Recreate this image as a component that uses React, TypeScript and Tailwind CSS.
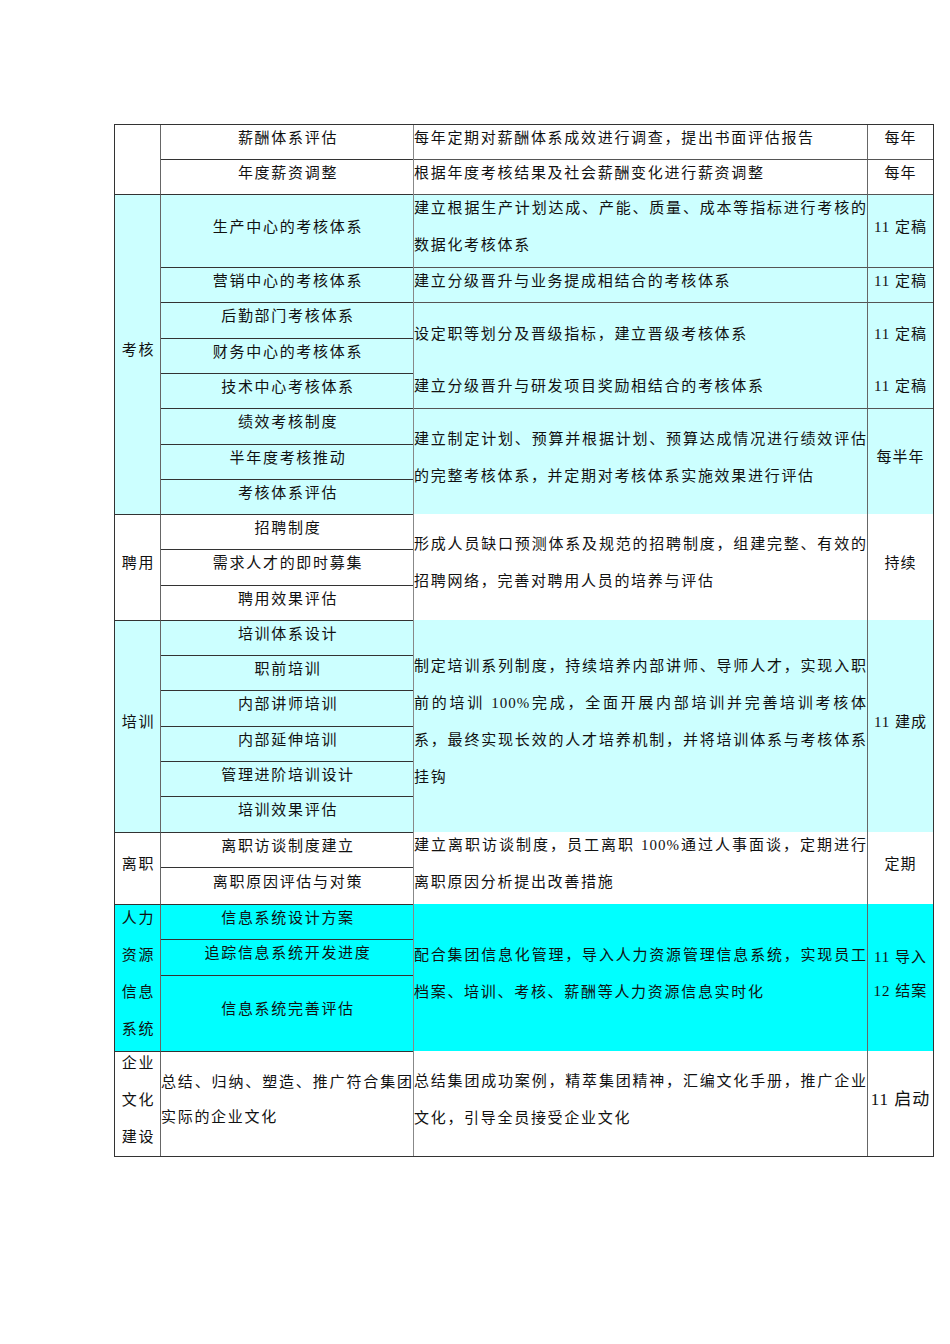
import React from "react";

interface Item {
  t: string[];
  h: string;
  left?: boolean;
}

interface Group {
  items: Item[];
  desc: { text: string; full?: boolean }[];
  when: string[];
  whenClass?: string;
  line: boolean;
}

interface Section {
  label: string[];
  bg: string;
  groups: Group[];
}

const LIGHT = "bg-[#ccffff]";
const CYAN = "bg-[#00ffff]";

const sections: Section[] = [
  {
    label: [],
    bg: "bg-white",
    groups: [
      {
        items: [{ t: ["薪酬体系评估"], h: "h-[34px]" }],
        desc: [{ text: "每年定期对薪酬体系成效进行调查，提出书面评估报告" }],
        when: ["每年"],
        line: true,
      },
      {
        items: [{ t: ["年度薪资调整"], h: "h-[35px]" }],
        desc: [{ text: "根据年度考核结果及社会薪酬变化进行薪资调整" }],
        when: ["每年"],
        line: true,
      },
    ],
  },
  {
    label: ["考核"],
    bg: LIGHT,
    groups: [
      {
        items: [{ t: ["生产中心的考核体系"], h: "h-[73px]" }],
        desc: [
          { text: "建立根据生产计划达成、产能、质量、成本等指标进行考核的", full: true },
          { text: "数据化考核体系" },
        ],
        when: ["11 定稿"],
        line: true,
      },
      {
        items: [{ t: ["营销中心的考核体系"], h: "h-[35px]" }],
        desc: [{ text: "建立分级晋升与业务提成相结合的考核体系" }],
        when: ["11 定稿"],
        line: true,
      },
      {
        items: [
          { t: ["后勤部门考核体系"], h: "h-[36px]" },
          { t: ["财务中心的考核体系"], h: "h-[35px]" },
        ],
        desc: [{ text: "设定职等划分及晋级指标，建立晋级考核体系" }],
        when: ["11 定稿"],
        line: true,
      },
      {
        items: [{ t: ["技术中心考核体系"], h: "h-[35px]" }],
        desc: [{ text: "建立分级晋升与研发项目奖励相结合的考核体系" }],
        when: ["11 定稿"],
        line: false,
      },
      {
        items: [
          { t: ["绩效考核制度"], h: "h-[36px]" },
          { t: ["半年度考核推动"], h: "h-[35px]" },
          { t: ["考核体系评估"], h: "h-[35px]" },
        ],
        desc: [
          { text: "建立制定计划、预算并根据计划、预算达成情况进行绩效评估", full: true },
          { text: "的完整考核体系，并定期对考核体系实施效果进行评估" },
        ],
        when: ["每半年"],
        line: true,
      },
    ],
  },
  {
    label: ["聘用"],
    bg: "bg-white",
    groups: [
      {
        items: [
          { t: ["招聘制度"], h: "h-[35px]" },
          { t: ["需求人才的即时募集"], h: "h-[36px]" },
          { t: ["聘用效果评估"], h: "h-[35px]" },
        ],
        desc: [
          { text: "形成人员缺口预测体系及规范的招聘制度，组建完整、有效的", full: true },
          { text: "招聘网络，完善对聘用人员的培养与评估" },
        ],
        when: ["持续"],
        line: false,
      },
    ],
  },
  {
    label: ["培训"],
    bg: LIGHT,
    groups: [
      {
        items: [
          { t: ["培训体系设计"], h: "h-[35px]" },
          { t: ["职前培训"], h: "h-[35px]" },
          { t: ["内部讲师培训"], h: "h-[36px]" },
          { t: ["内部延伸培训"], h: "h-[35px]" },
          { t: ["管理进阶培训设计"], h: "h-[35px]" },
          { t: ["培训效果评估"], h: "h-[36px]" },
        ],
        desc: [
          { text: "制定培训系列制度，持续培养内部讲师、导师人才，实现入职", full: true },
          { text: "前的培训 100%完成，全面开展内部培训并完善培训考核体", full: true },
          { text: "系，最终实现长效的人才培养机制，并将培训体系与考核体系", full: true },
          { text: "挂钩" },
        ],
        when: ["11 建成"],
        line: false,
      },
    ],
  },
  {
    label: ["离职"],
    bg: "bg-white",
    groups: [
      {
        items: [
          { t: ["离职访谈制度建立"], h: "h-[35px]" },
          { t: ["离职原因评估与对策"], h: "h-[37px]" },
        ],
        desc: [
          { text: "建立离职访谈制度，员工离职 100%通过人事面谈，定期进行", full: true },
          { text: "离职原因分析提出改善措施" },
        ],
        when: ["定期"],
        line: false,
      },
    ],
  },
  {
    label: ["人力", "资源", "信息", "系统"],
    bg: CYAN,
    groups: [
      {
        items: [
          { t: ["信息系统设计方案"], h: "h-[35px]" },
          { t: ["追踪信息系统开发进度"], h: "h-[36px]" },
          { t: ["信息系统完善评估"], h: "h-[76px]" },
        ],
        desc: [
          { text: "配合集团信息化管理，导入人力资源管理信息系统，实现员工", full: true },
          { text: "档案、培训、考核、薪酬等人力资源信息实时化" },
        ],
        when: ["11 导入", "12 结案"],
        whenClass: "leading-[34px]",
        line: false,
      },
    ],
  },
  {
    label: ["企业", "文化", "建设"],
    bg: "bg-white",
    groups: [
      {
        items: [
          {
            t: ["总结、归纳、塑造、推广符合集团", "实际的企业文化"],
            h: "h-[105px]",
            left: true,
          },
        ],
        desc: [
          { text: "总结集团成功案例，精萃集团精神，汇编文化手册，推广企业", full: true },
          { text: "文化，引导全员接受企业文化" },
        ],
        when: ["11 启动"],
        whenClass: "leading-[37px] text-[17px]",
        line: false,
      },
    ],
  },
];

const Line: React.FC<{ text: string; full?: boolean }> = ({ text, full }) =>
  full ? (
    <div className="whitespace-nowrap text-justify [text-align-last:justify] tracking-[1px]">
      {text}
    </div>
  ) : (
    <div className="whitespace-nowrap">{text}</div>
  );

// zero-height box so text never pushes the row taller; content overflows evenly round the middle
const Mid: React.FC<{ className?: string; children: React.ReactNode }> = ({ className = "", children }) => (
  <div className={`h-0 flex flex-col justify-center -translate-y-[4px] ${className}`}>{children}</div>
);

const App: React.FC = () => {
  return (
    <div className="min-h-screen bg-white pt-[124px] pl-[114px] font-['Liberation_Serif','Noto_Sans_CJK_SC',serif] text-[15px] tracking-[1.7px] text-[#111]">
      <div className="w-[820px] border border-[#333]">
        {sections.map((s, si) => (
          <div key={si} className={`flex ${s.bg}`}>
            {/* first column: section label */}
            <div
              className={`w-[46px] shrink-0 border-r border-r-[#666] flex items-center justify-center ${
                si > 0 ? "border-t border-t-[#333]" : ""
              }`}
            >
              <Mid className="text-center leading-[37px] pl-[2px]">
                {s.label.map((l) => (
                  <div key={l}>{l}</div>
                ))}
              </Mid>
            </div>

            <div className="flex flex-col">
              {s.groups.map((g, gi) => {
                const topLine = g.line && (si > 0 || gi > 0);
                return (
                  <div key={gi} className="flex">
                    {/* items */}
                    <div className="w-[253px] shrink-0 flex flex-col border-r border-r-[#888]">
                      {g.items.map((it, ii) => {
                        const first = si === 0 && gi === 0 && ii === 0;
                        return (
                          <div
                            key={ii}
                            className={`${it.h} flex items-center ${
                              it.left ? "justify-start" : "justify-center"
                            } ${first ? "" : "border-t border-t-[#333]"}`}
                          >
                            {it.left ? (
                              <Mid className="w-full leading-[35px]">
                                <Line text={it.t[0]} full />
                                <Line text={it.t[1]} />
                              </Mid>
                            ) : (
                              <Mid className="leading-[37px] pl-[2px]">{it.t[0]}</Mid>
                            )}
                          </div>
                        );
                      })}
                    </div>

                    {/* description */}
                    <div
                      className={`w-[454px] shrink-0 flex items-center border-r border-r-[#666] ${
                        topLine ? "border-t border-t-[#555]" : ""
                      }`}
                    >
                      <Mid className="w-full leading-[37px]">
                        {g.desc.map((d, di) => (
                          <Line key={di} text={d.text} full={d.full} />
                        ))}
                      </Mid>
                    </div>

                    {/* schedule */}
                    <div
                      className={`w-[65px] shrink-0 flex items-center justify-center ${
                        topLine ? "border-t border-t-[#555]" : ""
                      }`}
                    >
                      <Mid className={`text-center tracking-[1px] ${g.whenClass ?? "leading-[37px]"}`}>
                        {g.when.map((w) => (
                          <div key={w} className="whitespace-nowrap">
                            {w}
                          </div>
                        ))}
                      </Mid>
                    </div>
                  </div>
                );
              })}
            </div>
          </div>
        ))}
      </div>
    </div>
  );
};

export default App;
